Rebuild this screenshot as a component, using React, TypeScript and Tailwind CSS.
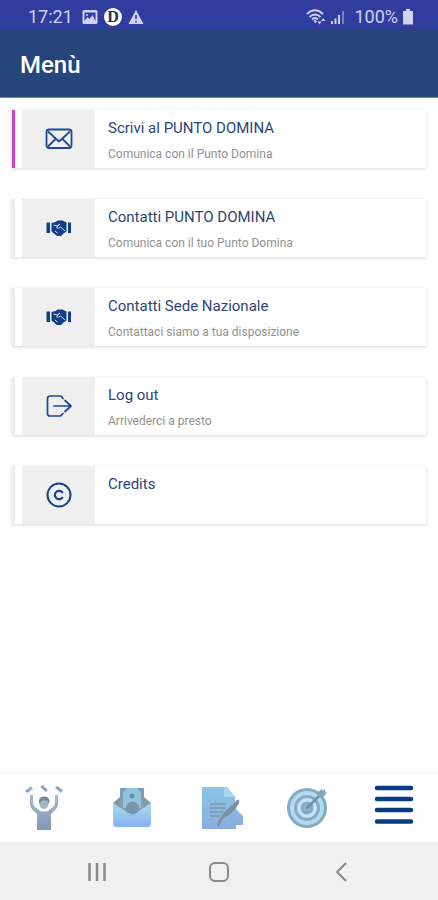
import React from 'react';

const MailIcon = () => (
  <svg className="h-7 w-7" viewBox="0 0 28 28" fill="none" stroke="#1f4a92" strokeWidth="1.8" strokeLinejoin="round" aria-hidden="true">
    <rect x="1.5" y="4.5" width="25" height="18.5" rx="2.5" />
    <path d="M3 6.500l11 10 11-10M3 21.500l8-8M25 21.500l-8-8" />
  </svg>
);

const HandsIcon = () => (
  <svg className="h-7 w-7" viewBox="0 0 28 28" aria-hidden="true">
    <path d="M1.500 8.500h3.500v10.500H1.500zM23 8.500h3v10.500h-3z" fill="#123f88" />
    <path d="M6.500 9l4-1 2-1.500h5l4 2v9l-3 2-2.500 2.500h-4l-3-2.500-2.500-2z" fill="#123f88" />
    <path d="M8.500 11l3.500 1 3-2M15 10l-3.500 3.500q1.500 2 4-.500l4.500 4M10 17l2.500 2" fill="none" stroke="#d5ddea" strokeWidth="1" />
  </svg>
);

const ExitIcon = () => (
  <svg className="h-7 w-7" viewBox="0 0 28 28" fill="none" stroke="#1c4890" strokeWidth="1.700" strokeLinecap="round" strokeLinejoin="round" aria-hidden="true">
    <path d="M18 6.500l-1.500-2Q16 4 15 4H5Q2.500 4 2.500 6.500v15Q2.500 24 5 24h9.500q1.500 0 2.500-1.500l1-1M9 14h17M20 8.500l6 5.500-6 5.500" />
  </svg>
);

const CopyrightIcon = () => (
  <svg className="h-7 w-7" viewBox="0 0 28 28" fill="none" stroke="#174389" strokeWidth="2" aria-hidden="true">
    <circle cx="14" cy="14" r="11.500" />
    <path d="M17.800 12a4.200 4.200 0 1 0 0 4" strokeWidth="2.200" />
  </svg>
);

const entries = [
  { title: 'Scrivi al PUNTO DOMINA', note: 'Comunica con il Punto Domina', icon: <MailIcon />, active: true },
  { title: 'Contatti PUNTO DOMINA', note: 'Comunica con il tuo Punto Domina', icon: <HandsIcon />, active: false },
  { title: 'Contatti Sede Nazionale', note: 'Contattaci siamo a tua disposizione', icon: <HandsIcon />, active: false },
  { title: 'Log out', note: 'Arrivederci a presto', icon: <ExitIcon />, active: false },
  { title: 'Credits', note: '', icon: <CopyrightIcon />, active: false },
];

function StatusBar() {
  return (
    <div className="flex h-[29px] items-center justify-between bg-[#303c9e] pl-7 pr-6 pt-1 text-[#d0d2f2]">
      <div className="flex items-center gap-1.5">
        <span className="w-12 text-lg leading-6">17:21</span>
        <svg className="h-4 w-4" viewBox="0 0 16 16" aria-hidden="true">
          <rect x="0.500" y="1" width="15" height="14" rx="1.500" fill="currentColor" />
          <path d="M2.500 12V3.500h11V12z" fill="#303c9e" />
          <path d="M2.500 12l3-4 2 2 3-4 3 6z" fill="currentColor" />
          <circle cx="5" cy="6" r="1" fill="currentColor" />
        </svg>
        <span className="flex h-[18px] w-[18px] items-center justify-center rounded-full bg-white font-['Liberation_Serif',serif] text-base font-bold leading-4 text-[#1c3460]">D</span>
        <svg className="h-4 w-4" viewBox="0 0 16 16" aria-hidden="true">
          <path d="M8 1l7.500 14H.5z" fill="currentColor" />
          <path d="M8 6v4M8 11.500v2" stroke="#303c9e" strokeWidth="1.600" />
        </svg>
      </div>
      <div className="flex items-center gap-1">
        <svg className="h-4 w-5" viewBox="0 0 20 16" fill="none" stroke="currentColor" strokeWidth="1.800" aria-hidden="true">
          <path d="M1 5q8-7.500 16 0M3.500 8q5.500-5 11 0M6 10.500q3-3 6 0" />
          <path d="M7.500 12l1.500-1.500 2 2-1.500 1.500z" fill="currentColor" stroke="none" />
          <path d="M11.500 12.500l2 3 2-3zM15 12l2.200-3 2.200 3z" fill="currentColor" stroke="none" />
        </svg>
        <svg className="h-4 w-4" viewBox="0 0 16 16" aria-hidden="true">
          <path d="M1 12h2v3H1zM4.500 9.500h2V15h-2zM8 6h2v9H8z" fill="currentColor" />
          <path d="M12 2h2v13h-2z" fill="currentColor" opacity="0.450" />
        </svg>
        <span className="ml-1 text-lg leading-6">100%</span>
        <svg className="h-4 w-3" viewBox="0 0 12 16" aria-hidden="true">
          <path d="M4 0h4v2h3v13.500H1V2h3z" fill="currentColor" />
        </svg>
      </div>
    </div>
  );
}

function PartyIcon() {
  return (
    <svg className="h-12 w-12" viewBox="0 0 48 48" aria-hidden="true">
      <defs>
        <linearGradient id="body" x1="0" y1="0" x2="0" y2="1">
          <stop offset="0" stopColor="#a5bac9" />
          <stop offset="1" stopColor="#8296b8" />
        </linearGradient>
      </defs>
      <path d="M10 11v9q0 3 2 5l5 5v16h14V30l5-5q2-2 2-5v-9h-3v8q0 2-2 4l-5 4q-4 1-8 0l-5-4q-2-2-2-4v-8z" fill="url(#body)" />
      <ellipse cx="24" cy="19.500" rx="4.500" ry="5.500" fill="#a6b9c3" />
      <path d="M19.500 20q-2-7.500 4.500-7.500 7 0 5 7.500l-2-3.500h-5z" fill="#73899a" />
      <path d="M5 7l2 2 6-4-2-3zM20 3l3-2 5 5-2 2zM35 4l2-2 6 4-2 3z" fill="#9bb3d1" />
      <path d="M6 6l3 2M22 2l4 5M37 3l5 4" stroke="#8698c2" strokeWidth="1.500" />
    </svg>
  );
}

function MoneyIcon() {
  return (
    <svg className="h-12 w-12" viewBox="0 0 48 48" aria-hidden="true">
      <defs>
        <linearGradient id="mail" x1="0" y1="0" x2="0" y2="1">
          <stop offset="0" stopColor="#acdcf2" />
          <stop offset="1" stopColor="#86b2ed" />
        </linearGradient>
      </defs>
      <path d="M5 19l7-6h24l7 6-9 10H14z" fill="#8299a8" />
      <path d="M12 4h24v20l-6 5H18l-6-5z" fill="#809fb2" />
      <path d="M15 4h18v20H15z" fill="#93c4de" />
      <path d="M15 4h4l-4 4zM33 4h-4l4 4z" fill="#719bb4" />
      <circle cx="24" cy="12" r="2.500" fill="#6592ad" />
      <path d="M5 19l15 10q4 2 8 0l15-10v20q0 4-4 4H9q-4 0-4-4z" fill="url(#mail)" />
      <circle cx="24.500" cy="24" r="6.500" fill="#7895ab" />
    </svg>
  );
}

function DocumentIcon() {
  return (
    <svg className="h-12 w-12" viewBox="0 0 48 48" aria-hidden="true">
      <defs>
        <linearGradient id="paper" x1="0" y1="0" x2="0" y2="1">
          <stop offset="0" stopColor="#8ac5e8" />
          <stop offset="1" stopColor="#8badde" />
        </linearGradient>
      </defs>
      <path d="M7 3h25l8 10v11l8 8v9h-7v4H7z" fill="url(#paper)" />
      <path d="M29 3h3l8 10H29z" fill="#a5d6ee" />
      <path d="M15 20h16M15 24h15M15 28h13M15 32h10" stroke="#7d98ac" strokeWidth="1.600" />
      <path d="M22 42q2-9 8-14L42 16q3-1 2 3-5 10-14 14-4 3-6 9z" fill="#7b909f" />
    </svg>
  );
}

function TargetIcon() {
  return (
    <svg className="h-12 w-12" viewBox="0 0 48 48" aria-hidden="true">
      <circle cx="24" cy="24" r="20" fill="#89a9bd" />
      <circle cx="24" cy="24" r="17" fill="#afdcf4" />
      <circle cx="24" cy="24" r="13" fill="#8aabc2" />
      <circle cx="24" cy="24" r="10" fill="#c2e5f7" />
      <circle cx="24" cy="24" r="6.500" fill="#89a9c3" />
      <circle cx="24" cy="24" r="3" fill="#9abdd4" />
      <path d="M23 25L39 9" stroke="#6e91aa" strokeWidth="2.500" />
      <path d="M35 12V8l4-3 1 2 2-2v3l2 1-4 4z" fill="#80a4bb" />
    </svg>
  );
}

function BarsIcon() {
  return (
    <svg className="h-12 w-12" viewBox="0 0 48 48" fill="none" stroke="#083b84" strokeWidth="4.500" strokeLinecap="round" aria-hidden="true">
      <path d="M7 4h34M7 15h34M7 26h34M7 37.500h34" />
    </svg>
  );
}

const tabs = [
  { name: 'Eventi', icon: <PartyIcon /> },
  { name: 'Pagamenti', icon: <MoneyIcon /> },
  { name: 'Documenti', icon: <DocumentIcon /> },
  { name: 'Obiettivi', icon: <TargetIcon /> },
  { name: 'Menù', icon: <BarsIcon /> },
];

export default function App() {
  return (
    <div className="flex min-h-screen flex-col bg-[#fefefe] font-[Roboto,sans-serif]">
      <StatusBar />
      <header className="flex h-[69px] items-center border-b border-[#6f8baa] bg-[#26457b] px-5 pt-1">
        <h1 className="text-2xl font-medium leading-8 text-white">Menù</h1>
      </header>

      <main className="flex flex-1 flex-col gap-[31px] px-3 pt-3">
        {entries.map((entry) => (
          <button
            key={entry.title}
            type="button"
            className={`flex h-[58px] w-full border-l-3 bg-white text-left shadow-[0_1px_3px_rgba(0,0,0,0.15)] ${entry.active ? 'border-[#d43bd3]' : 'border-[#eeeeee]'}`}
          >
            <span className="ml-[7px] flex h-full w-[73px] shrink-0 items-center justify-center bg-[#efefef]">{entry.icon}</span>
            <span className="flex flex-col gap-1 pl-[13px] pt-1.5">
              <span className="text-[15px] leading-6 text-[#2d4679]">{entry.title}</span>
              <span className="text-xs leading-5 text-[#929292]">{entry.note}</span>
            </span>
          </button>
        ))}
      </main>

      <nav className="flex h-[70px] items-center justify-between border-t border-[#f1f1f1] px-5">
        {tabs.map((tab) => (
          <button key={tab.name} type="button" aria-label={tab.name}>{tab.icon}</button>
        ))}
      </nav>

      <div className="flex h-[58px] items-center justify-between bg-[#f0f0f0] px-[85px] pt-0.5 text-[#898989]">
        <button type="button" aria-label="Recent apps">
          <svg className="h-6 w-6" viewBox="0 0 24 24" stroke="currentColor" strokeWidth="2.500" aria-hidden="true">
            <path d="M4.500 3v18M12 3v18M19.500 3v18" />
          </svg>
        </button>
        <button type="button" aria-label="Home">
          <svg className="h-6 w-6" viewBox="0 0 24 24" fill="none" stroke="currentColor" strokeWidth="2" aria-hidden="true">
            <rect x="3" y="3" width="18" height="18" rx="5" />
          </svg>
        </button>
        <button type="button" aria-label="Back">
          <svg className="h-6 w-6" viewBox="0 0 24 24" fill="none" stroke="currentColor" strokeWidth="2" aria-hidden="true">
            <path d="M17 3l-9 9 9 9" />
          </svg>
        </button>
      </div>
    </div>
  );
}
